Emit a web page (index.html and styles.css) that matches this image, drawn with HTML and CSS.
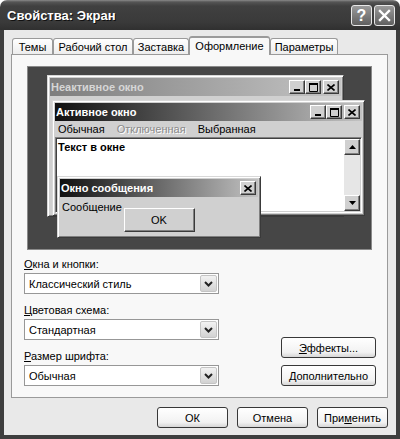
FILE: index.html
```html
<!DOCTYPE html>
<html lang="ru">
<head>
<meta charset="utf-8">
<title>Свойства: Экран</title>
<link rel="stylesheet" href="styles.css">
</head>
<body>
<div class="window">
  <div class="titlebar">
    <span class="title">Свойства: Экран</span>
    <div class="tb-buttons">
      <span class="tb-btn">?</span>
      <span class="tb-btn"><svg width="13" height="13" viewBox="0 0 13 13"><path d="M2 2 L11 11 M11 2 L2 11" stroke="#fff" stroke-width="2.4" stroke-linecap="square"/></svg></span>
    </div>
  </div>
  <div class="frame">
    <div class="tabs">
      <div class="tab w1">Темы</div>
      <div class="tab w2">Рабочий стол</div>
      <div class="tab w3">Заставка</div>
      <div class="tab w4 active">Оформление</div>
      <div class="tab w5">Параметры</div>
    </div>
    <div class="panel">
      <div class="preview">
        <div class="pw inactive">
          <div class="cap cap-inactive">
            <span>Неактивное окно</span>
            <div class="cbs">
              <span class="cb"><svg width="8" height="7" viewBox="0 0 8 7"><rect x="1" y="5" width="6" height="2" fill="#000"/></svg></span>
              <span class="cb"><svg width="9" height="9" viewBox="0 0 9 9"><path d="M0.5 1.5 H8.5 V8.5 H0.5 Z" fill="none" stroke="#000"/><rect x="0" y="0" width="9" height="2" fill="#000"/></svg></span>
              <span class="cb close"><svg width="8" height="7" viewBox="0 0 8 7"><path d="M0.5 0.5 L7.5 6.5 M7.5 0.5 L0.5 6.5" stroke="#000" stroke-width="1.6"/></svg></span>
            </div>
          </div>
        </div>
        <div class="pw active-win">
          <div class="cap cap-active">
            <span>Активное окно</span>
            <div class="cbs">
              <span class="cb"><svg width="8" height="7" viewBox="0 0 8 7"><rect x="1" y="5" width="6" height="2" fill="#000"/></svg></span>
              <span class="cb"><svg width="9" height="9" viewBox="0 0 9 9"><path d="M0.5 1.5 H8.5 V8.5 H0.5 Z" fill="none" stroke="#000"/><rect x="0" y="0" width="9" height="2" fill="#000"/></svg></span>
              <span class="cb close"><svg width="8" height="7" viewBox="0 0 8 7"><path d="M0.5 0.5 L7.5 6.5 M7.5 0.5 L0.5 6.5" stroke="#000" stroke-width="1.6"/></svg></span>
            </div>
          </div>
          <div class="menu">
            <span>Обычная</span>
            <span class="disabled">Отключенная</span>
            <span>Выбранная</span>
          </div>
          <div class="textarea">
            <div class="text">Текст в окне</div>
            <div class="scrollbar">
              <span class="sb-btn"><svg width="7" height="4" viewBox="0 0 7 4"><path d="M3.5 0 L7 4 H0 Z" fill="#000"/></svg></span>
              <span class="sb-btn"><svg width="7" height="4" viewBox="0 0 7 4"><path d="M0 0 H7 L3.5 4 Z" fill="#000"/></svg></span>
            </div>
          </div>
        </div>
        <div class="pw msg">
          <div class="cap cap-active">
            <span>Окно сообщения</span>
            <div class="cbs">
              <span class="cb close"><svg width="8" height="7" viewBox="0 0 8 7"><path d="M0.5 0.5 L7.5 6.5 M7.5 0.5 L0.5 6.5" stroke="#000" stroke-width="1.6"/></svg></span>
            </div>
          </div>
          <div class="msg-body">
            <div class="msg-text">Сообщение</div>
            <div class="classic-btn">OK</div>
          </div>
        </div>
      </div>
      <div class="settings">
        <div class="fields">
          <div class="label"><u>О</u>кна и кнопки:</div>
          <div class="select"><span>Классический стиль</span><span class="arrow"><svg width="9" height="6" viewBox="0 0 9 6"><path d="M1 1 L4.5 4.5 L8 1" fill="none" stroke="#222" stroke-width="2"/></svg></span></div>
          <div class="label next"><u>Ц</u>ветовая схема:</div>
          <div class="select"><span>Стандартная</span><span class="arrow"><svg width="9" height="6" viewBox="0 0 9 6"><path d="M1 1 L4.5 4.5 L8 1" fill="none" stroke="#222" stroke-width="2"/></svg></span></div>
          <div class="label next"><u>Р</u>азмер шрифта:</div>
          <div class="select"><span>Обычная</span><span class="arrow"><svg width="9" height="6" viewBox="0 0 9 6"><path d="M1 1 L4.5 4.5 L8 1" fill="none" stroke="#222" stroke-width="2"/></svg></span></div>
        </div>
        <div class="side-buttons">
          <div class="btn side"><u>Э</u>ффекты...</div>
          <div class="btn side"><u>Д</u>ополнительно</div>
        </div>
      </div>
    </div>
    <div class="footer">
      <div class="btn foot">ОК</div>
      <div class="btn foot">Отмена</div>
      <div class="btn foot">При<u>м</u>енить</div>
    </div>
  </div>
</div>
</body>
</html>
```

FILE: styles.css
```css
* { box-sizing: border-box; }
html, body { margin: 0; padding: 0; }
body {
  width: 400px;
  height: 439px;
  overflow: hidden;
  background: #fff;
  font-family: "Liberation Sans", Arial, sans-serif;
  font-size: 11px;
  color: #000;
}
.window {
  width: 400px;
  height: 439px;
  display: flex;
  flex-direction: column;
}
.titlebar {
  height: 30px;
  flex: none;
  display: flex;
  align-items: center;
  justify-content: space-between;
  padding: 0 5px 0 7px;
  border-radius: 7px 7px 0 0;
  background: linear-gradient(to bottom, #8a8a8a 0, #555 2px, #404040 6px, #3a3a3a 22px, #303030 30px);
}
.title {
  color: #fff;
  font-weight: bold;
  font-size: 13px;
  text-shadow: 1px 1px #111;
}
.tb-buttons { display: flex; gap: 2px; margin-top: 1px; }
.tb-btn {
  width: 21px;
  height: 21px;
  border: 1px solid #e8e8e8;
  border-radius: 3px;
  background: linear-gradient(to bottom, #9a9a9a, #606060);
  display: flex;
  align-items: center;
  justify-content: center;
  color: #fff;
  font-weight: bold;
  font-size: 16px;
}
.frame {
  flex: 1;
  background: #e9e9e9;
  border: 4px solid #3e3e3e;
  border-top: 0;
  padding: 6px 8px 0 7px;
  display: flex;
  flex-direction: column;
}
.tabs {
  height: 18px;
  display: flex;
  align-items: flex-end;
  padding-left: 1px;
  position: relative;
  z-index: 1;
}
.tab {
  height: 16px;
  border: 1px solid #9a9a9a;
  border-bottom: 0;
  border-radius: 3px 3px 0 0;
  background: linear-gradient(to bottom, #fff, #ededed);
  display: flex;
  align-items: center;
  justify-content: center;
  padding-top: 1px;
}
.tab.active {
  height: 19px;
  margin-bottom: -1px;
  background: #f8f8f8;
  border-top: 2px solid #9a9a9a;
  padding-bottom: 2px;
}
.w1 { width: 41px; }
.w2 { width: 80px; }
.w3 { width: 56px; }
.w4 { width: 81px; }
.w5 { width: 68px; }
.panel {
  height: 344px;
  flex: none;
  border: 1px solid #9a9a9a;
  background: #f8f8f8;
  padding: 11px 11px 0 12px;
  display: flex;
  flex-direction: column;
}
.preview {
  position: relative;
  margin-left: 3px;
  width: 345px;
  height: 184px;
  flex: none;
  background: #464646;
  border: 1px solid #8a8a8a;
}
.pw {
  position: absolute;
  background: #d0d0d0;
  border: 1px solid;
  border-color: #d8d8d8 #3a3a3a #3a3a3a #d8d8d8;
  box-shadow: inset 1px 1px #fff, inset -1px -1px #808080;
  padding: 2px;
  display: flex;
  flex-direction: column;
}
.inactive { left: 19px; top: 8px; width: 297px; height: 142px; }
.active-win { left: 24px; top: 33px; width: 313px; height: 116px; }
.msg { left: 29px; top: 109px; width: 204px; height: 62px; }
.cap {
  height: 18px;
  flex: none;
  display: flex;
  align-items: center;
  justify-content: space-between;
  padding: 0 2px 0 1px;
  font-weight: bold;
  color: #fff;
}
.cap-inactive {
  background: linear-gradient(to right, #7e7e7e, #c4c4c4);
  color: #d6d6d6;
}
.cap-active {
  background: linear-gradient(to right, #101010, #c2c2c2);
}
.cbs { display: flex; }
.cb {
  width: 16px;
  height: 14px;
  background: #d0d0d0;
  border: 1px solid;
  border-color: #fff #3a3a3a #3a3a3a #fff;
  box-shadow: inset -1px -1px #808080;
  display: flex;
  align-items: center;
  justify-content: center;
}
.cb.close { margin-left: 2px; }
.menu {
  height: 16px;
  flex: none;
  display: flex;
  align-items: center;
  gap: 12px;
  padding-left: 3px;
}
.menu .disabled {
  color: #8a8a8a;
  text-shadow: 1px 1px #fff;
}
.textarea {
  flex: 1;
  display: flex;
  justify-content: space-between;
  background: #fff;
  border: 1px solid;
  border-color: #808080 #fff #fff #808080;
  box-shadow: inset 1px 1px #404040, inset -1px -1px #d0d0d0;
  padding: 1px;
}
.text {
  font-weight: bold;
  padding: 2px 0 0 1px;
}
.scrollbar {
  width: 16px;
  display: flex;
  flex-direction: column;
  justify-content: space-between;
  background: #e6e6e6;
}
.sb-btn {
  width: 16px;
  height: 16px;
  background: #d0d0d0;
  border: 1px solid;
  border-color: #fff #3a3a3a #3a3a3a #fff;
  box-shadow: inset -1px -1px #808080;
  display: flex;
  align-items: center;
  justify-content: center;
}
.msg-body {
  flex: 1;
  display: flex;
  flex-direction: column;
}
.msg-text { padding: 4px 2px 0; line-height: 13px; }
.classic-btn {
  align-self: center;
  margin-top: -6px;
  width: 71px;
  height: 24px;
  background: #d0d0d0;
  border: 1px solid;
  border-color: #fff #3a3a3a #3a3a3a #fff;
  box-shadow: inset -1px -1px #808080;
  display: flex;
  align-items: center;
  justify-content: center;
}
.settings {
  margin-top: 8px;
  display: flex;
  justify-content: space-between;
  align-items: flex-end;
}
.fields {
  width: 195px;
  display: flex;
  flex-direction: column;
}
.label {
  height: 13px;
  line-height: 13px;
  margin-bottom: 2px;
}
.label.next { margin-top: 10px; }
.select {
  height: 21px;
  background: #fff;
  border: 1px solid #979797;
  display: flex;
  align-items: center;
  justify-content: space-between;
  padding: 0 1px 0 4px;
}
.arrow {
  width: 17px;
  height: 17px;
  border: 1px solid #c4c4c4;
  border-radius: 2px;
  background: linear-gradient(to bottom, #f2f2f2, #d2d2d2);
  display: flex;
  align-items: center;
  justify-content: center;
}
.side-buttons {
  display: flex;
  flex-direction: column;
  gap: 7px;
}
.btn {
  height: 21px;
  border: 1px solid #383838;
  border-radius: 3px;
  background: linear-gradient(to bottom, #ffffff, #f2f2f2 75%, #d6d6d6);
  display: flex;
  align-items: center;
  justify-content: center;
}
.btn.side { width: 95px; }
.footer {
  margin-top: 9px;
  display: flex;
  justify-content: flex-end;
  gap: 9px;
}
.btn.foot { width: 71px; }
```
